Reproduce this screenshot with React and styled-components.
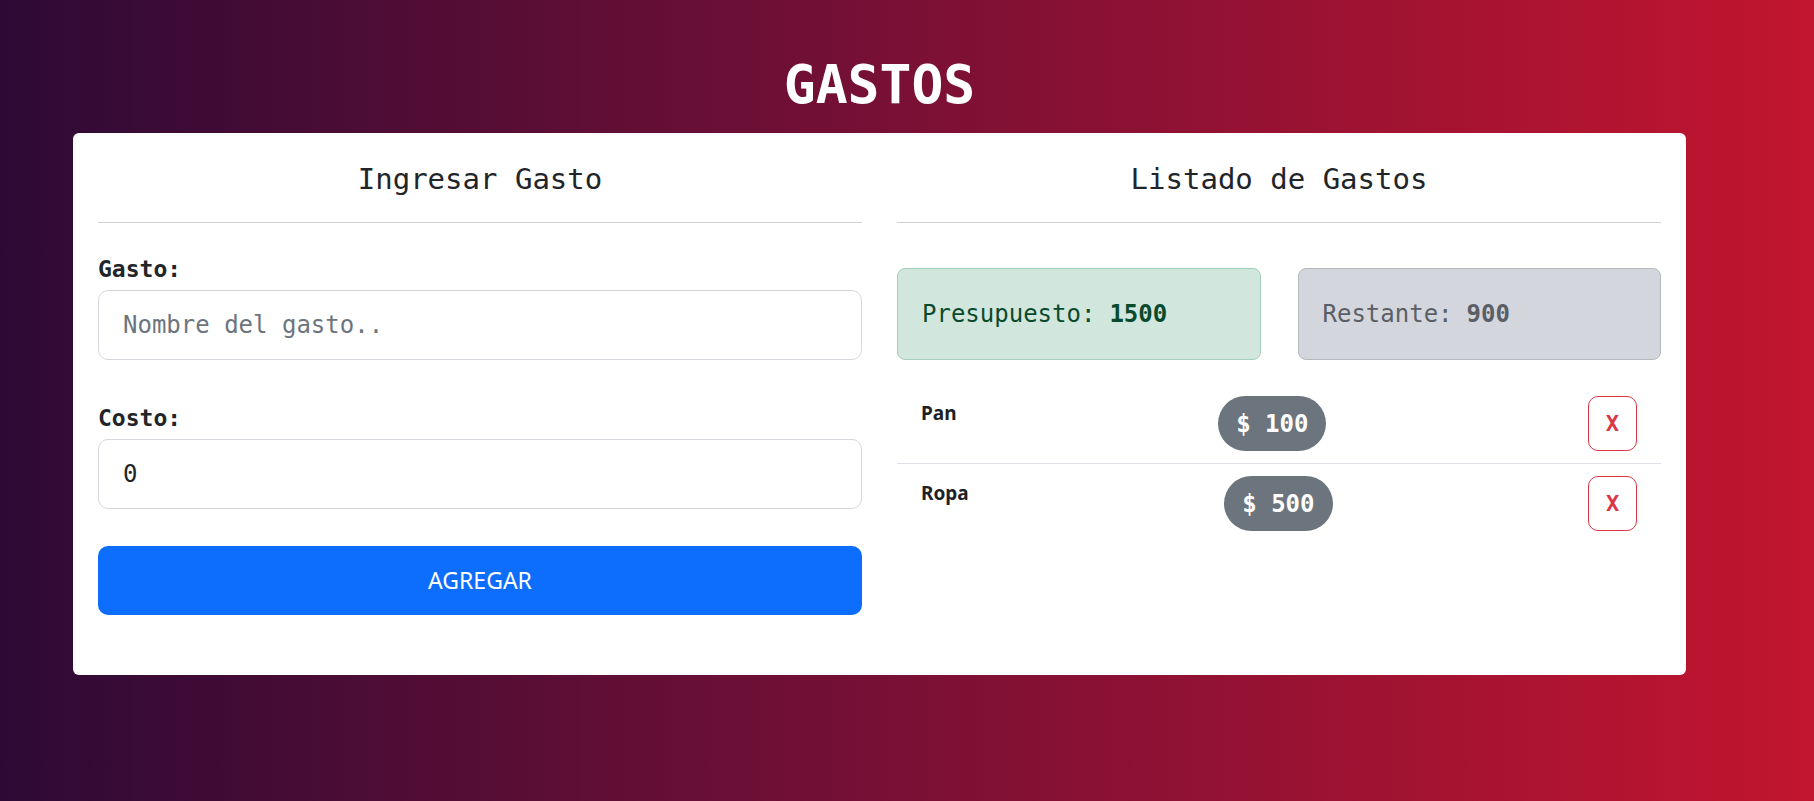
import React from 'react';
import styled, { createGlobalStyle } from 'styled-components';

const GlobalStyle = createGlobalStyle`
  * {
    box-sizing: border-box;
  }

  body {
    margin: 0;
    font-family: "DejaVu Sans Mono", "Liberation Mono", monospace;
    color: #212529;
  }
`;

const gastos = [
  { id: 1, nombre: 'Pan', costo: 100 },
  { id: 2, nombre: 'Ropa', costo: 500 },
];

const App = () => {
  return (
    <Page>
      <GlobalStyle />
      <Title>GASTOS</Title>

      <Card>
        <Column>
          <Heading>Ingresar Gasto</Heading>
          <Divider />

          <Form onSubmit={(e) => e.preventDefault()}>
            <Field>
              <Label htmlFor="gasto">Gasto:</Label>
              <Input id="gasto" type="text" placeholder="Nombre del gasto.." />
            </Field>

            <Field>
              <Label htmlFor="costo">Costo:</Label>
              <Input id="costo" type="number" defaultValue="0" />
            </Field>

            <SubmitButton type="submit">AGREGAR</SubmitButton>
          </Form>
        </Column>

        <Column>
          <Heading>Listado de Gastos</Heading>
          <Divider />

          <Summary>
            <Alert $variant="success">
              Presupuesto: <strong>1500</strong>
            </Alert>
            <Alert $variant="secondary">
              Restante: <strong>900</strong>
            </Alert>
          </Summary>

          <List>
            {gastos.map((gasto) => (
              <Item key={gasto.id}>
                <ItemName>{gasto.nombre}</ItemName>
                <Badge>$ {gasto.costo}</Badge>
                <DeleteButton type="button">X</DeleteButton>
              </Item>
            ))}
          </List>
        </Column>
      </Card>
    </Page>
  );
};

const Page = styled.div`
  min-height: 100vh;
  padding: 53px 0 40px;
  background: linear-gradient(to right, #2d0a35 0%, #7a1035 50%, #c2152f 100%);
`;

const Title = styled.h1`
  width: 1613px;
  margin: 0 0 16px 73px;
  text-align: center;
  color: #fff;
  font-size: 53px;
  font-weight: 700;
  line-height: 1.2;
`;

const Card = styled.div`
  width: 1613px;
  margin-left: 73px;
  padding: 29px 25px 60px;
  background: #fff;
  border-radius: 6px;
  display: grid;
  grid-template-columns: 1fr 1fr;
  column-gap: 35px;
`;

const Column = styled.div`
  display: flex;
  flex-direction: column;
`;

const Heading = styled.h2`
  margin: 0;
  text-align: center;
  font-size: 29px;
  font-weight: 400;
  line-height: 1.2;
  color: #212529;
`;

const Divider = styled.hr`
  margin: 26px 0 0;
  border: 0;
  border-top: 1px solid #cfd0d3;
`;

const Form = styled.form`
  display: flex;
  flex-direction: column;
  padding-top: 33px;
`;

const Field = styled.div`
  display: flex;
  flex-direction: column;
  gap: 6px;
  margin-bottom: 45px;

  & + & {
    margin-bottom: 37px;
  }
`;

const Label = styled.label`
  font-size: 23px;
  font-weight: 700;
  line-height: 1.2;
  color: #212529;
`;

const Input = styled.input`
  height: 70px;
  padding: 0 24px;
  border: 1px solid #d5d8dc;
  border-radius: 10px;
  font-family: "DejaVu Sans Mono", "Liberation Mono", monospace;
  font-size: 24px;
  color: #212529;
  outline: none;
  -moz-appearance: textfield;

  &::placeholder {
    color: #6c757d;
  }

  &::-webkit-outer-spin-button,
  &::-webkit-inner-spin-button {
    -webkit-appearance: none;
    margin: 0;
  }
`;

const SubmitButton = styled.button`
  height: 69px;
  border: none;
  border-radius: 10px;
  background: #0d6efd;
  color: #fff;
  font-family: "Noto Sans", "Open Sans", sans-serif;
  font-size: 23px;
  font-weight: 400;
  cursor: pointer;

  &:hover {
    background: #0b5ed7;
  }
`;

const Summary = styled.div`
  display: grid;
  grid-template-columns: 1fr 1fr;
  column-gap: 37px;
  margin-top: 45px;
`;

const Alert = styled.div`
  height: 92px;
  display: flex;
  align-items: center;
  padding: 0 24px;
  border-radius: 8px;
  font-size: 24px;
  border: 1px solid ${({ $variant }) => ($variant === 'success' ? '#a3cfbb' : '#b5b9c0')};
  background: ${({ $variant }) => ($variant === 'success' ? '#d1e7dd' : '#d3d6dd')};
  color: ${({ $variant }) => ($variant === 'success' ? '#0a4a2c' : '#5a5f66')};

  strong {
    margin-left: 14px;
    font-weight: 700;
  }
`;

const List = styled.ul`
  list-style: none;
  margin: 24px 0 0;
  padding: 0;
`;

const Item = styled.li`
  display: flex;
  justify-content: space-between;
  padding: 12px 24px;
  border-bottom: 1px solid #dee2e6;

  &:last-child {
    border-bottom: none;
  }
`;

const ItemName = styled.span`
  padding-top: 3px;
  font-family: "Noto Sans", "Open Sans", sans-serif;
  font-size: 19px;
  font-weight: 700;
  line-height: 1.5;
  color: #1d2125;
`;

const Badge = styled.span`
  height: 55px;
  display: inline-flex;
  align-items: center;
  padding: 0 18px;
  border-radius: 28px;
  background: #6c757d;
  color: #fff;
  font-size: 24px;
  font-weight: 700;
`;

const DeleteButton = styled.button`
  width: 49px;
  height: 55px;
  padding: 0;
  border: 1px solid #dc3545;
  border-radius: 10px;
  background: #fff;
  color: #dc3545;
  font-family: "DejaVu Sans Mono", "Liberation Mono", monospace;
  font-size: 22px;
  font-weight: 700;
  cursor: pointer;
`;

export default App;
